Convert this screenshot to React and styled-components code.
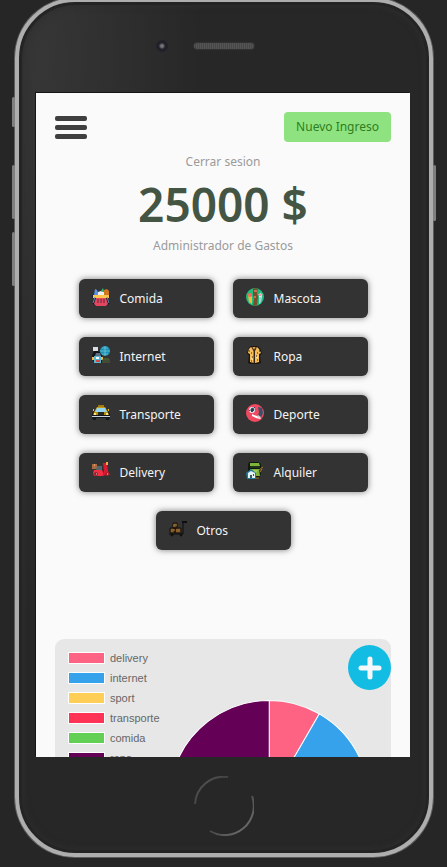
import React from "react";
import styled, { createGlobalStyle } from "styled-components";

const GlobalStyle = createGlobalStyle`
  *, *::before, *::after { box-sizing: border-box; }
  html, body { margin: 0; background: #262626; }
  body, button {
    font-family: "Noto Sans", "Open Sans", sans-serif;
    font-size: 12px;
    line-height: 18px;
  }
`;

const Page = styled.div`
  height: 100vh;
  min-height: 480px;
  padding: 0 14px 10px 15px;
  overflow: hidden;
  background: #262626;
`;

const Device = styled.div`
  position: relative;
  height: calc(100% + 2px);
  margin-top: -2px;
  padding: 0 19px 0 17px;
  display: flex;
  flex-direction: column;
  border: 4px solid #aeaeae;
  border-radius: 60px;
  background: radial-gradient(ellipse 160px 560px at 20px 60px, #363636, #272727);
  box-shadow: 0 0 0 1px #5c5c5c, inset 0 0 0 3px #242424, inset 0 0 6px 4px #2e2e2e;
`;

const SideKey = styled.span`
  position: absolute;
  top: ${(p) => p.$top}px;
  ${(p) => (p.$side === "left" ? "left: -7px;" : "right: -7px;")}
  width: 3px;
  height: ${(p) => p.$length}px;
  border-radius: 2px;
  background: #808080;
`;

const TopBezel = styled.div`
  flex: none;
  height: 91px;
  padding: 0 0 3px 2px;
  display: grid;
  grid-template-columns: 1fr auto 1fr;
  align-items: center;
`;

const Camera = styled.span`
  justify-self: end;
  width: 12px;
  height: 12px;
  margin-right: 26px;
  border: 3px solid #222029;
  border-radius: 50%;
  background: radial-gradient(circle, #77777c 0 1px, #34333b 3px);
`;

const Speaker = styled.span`
  width: 60px;
  height: 6px;
  border-radius: 3px;
  background: repeating-linear-gradient(90deg, #545454 0 1px, #474747 1px 2px);
  box-shadow: 0 0 1px 1px #333333;
`;

const BottomBezel = styled.div`
  flex: none;
  height: 96px;
  padding: 2px 0 0 2px;
  display: flex;
  align-items: center;
  justify-content: center;
`;

const HomeButton = styled.button`
  width: 60px;
  height: 60px;
  padding: 0;
  border: 0;
  border-radius: 50%;
  background: none;
`;

const Viewport = styled.div`
  position: relative;
  flex: 1;
  min-height: 0;
  background: #fafafa;
  box-shadow: -1px -1px 0 #151515;
`;

const Scroller = styled.main`
  height: 100%;
  padding: 19px;
  overflow-y: auto;
  scrollbar-width: none;
`;

const Header = styled.header`
  display: flex;
  align-items: center;
  justify-content: space-between;
`;

const MenuButton = styled.button`
  display: flex;
  flex-direction: column;
  gap: 4px;
  padding: 0;
  border: 0;
  background: none;
`;

const MenuBar = styled.span`
  width: 32px;
  height: 5px;
  border-radius: 2px;
  background: #3f3f3f;
`;

const IncomeButton = styled.button`
  padding: 6px 12px;
  border: 0;
  border-radius: 4px;
  background: #8ee380;
  color: #2f7d22;
`;

const Summary = styled.section`
  display: flex;
  flex-direction: column;
  align-items: center;
  margin-top: 11px;
  color: #9b9b9b;
`;

const LogoutLink = styled.a`
  color: inherit;
  text-decoration: none;
`;

const Amount = styled.h1`
  margin: 4px 0;
  color: #445544;
  font-size: 46px;
  font-weight: 600;
  line-height: 58px;
`;

const Caption = styled.p`
  margin: 0;
`;

const Categories = styled.nav`
  display: flex;
  flex-wrap: wrap;
  justify-content: center;
  gap: 19px;
  max-width: 300px;
  margin: 24px auto 0;
`;

const CategoryButton = styled.button`
  display: flex;
  align-items: center;
  gap: 10px;
  width: 135px;
  height: 39px;
  padding: 0 13px;
  border: 0;
  border-radius: 6px;
  background: #333333;
  color: #f4f4f4;
  box-shadow: 0 0 6px rgba(0, 0, 0, 0.5);
`;

const CategoryIcon = styled.svg`
  flex: none;
  width: 18px;
  height: 18px;
  margin-bottom: 4px;
`;

const ChartCard = styled.section`
  display: flex;
  align-items: flex-start;
  margin-top: 89px;
  padding: 9px 13px 24px;
  border-radius: 9px;
  background: #e7e7e7;
`;

const Legend = styled.ul`
  flex: none;
  margin: 0;
  padding: 0;
  list-style: none;
  color: #666666;
  font-family: "Liberation Sans", Arial, sans-serif;
  font-size: 11px;
  line-height: 20px;
`;

const LegendItem = styled.li`
  display: flex;
  align-items: center;
  gap: 5px;
  height: 20px;
`;

const Swatch = styled.span`
  width: 37px;
  height: 12px;
  border: 1px solid #ffffff;
  background: ${(p) => p.$color};
`;

const Pie = styled.svg`
  flex: 1;
  min-width: 0;
  height: 201px;
  margin-top: 52px;
`;

const AddButton = styled.button`
  position: absolute;
  right: 19px;
  bottom: 67px;
  display: flex;
  align-items: center;
  justify-content: center;
  width: 43px;
  height: 45px;
  padding: 0;
  border: 0;
  border-radius: 50%;
  background: #12bce2;
`;

const ART = {
  Comida: (
    <>
      <path d="M0 7h18v2l-2 1 2 5-3 3H3l-3-3 2-5-2-1z" fill="#171c2c" />
      <path d="M2 7l1-6 2 1 2 5z" fill="#5b91e8" />
      <path d="M6 4l3-1 4 1v4H6z" fill="#edf0ef" />
      <path d="M9 3l2-3 1 3-2 1z" fill="#2bb778" />
      <path d="M12 2l3-1 2 2v4h-5z" fill="#cf7621" />
      <path d="M1 7h16v3H1z" fill="#ffc54c" />
      <path d="M4 10h10l2 6-2 2H4l-2-2z" fill="#e1475f" />
      <path d="M6 11v4M9 11v4M12 11v4" stroke="#64243b" />
      <path d="M3 9L1 15M15 9l2 6" stroke="#568ab0" />
    </>
  ),
  Mascota: (
    <>
      <circle cx="9" cy="9" r="9" fill="#1fbd7b" />
      <path d="M7 1l2-1 3 1-1 4 1 4-1 8-2 1-2-1 1-6-1-4z" fill="#77502e" />
      <path d="M8 2h3v2H8zM8 8h2v2H8z" fill="#d46b53" />
      <path d="M2 7l2-2 2 2v9l-3-2z" fill="#f5b83f" />
      <circle cx="4" cy="7" r="2" fill="#f06964" />
      <path d="M13 6l2-1 1 2-1 7-2 2z" fill="#e9f0f1" />
      <path d="M12 6h5l-2 2h-2z" fill="#f39aaa" />
      <path d="M14 9v6" stroke="#72a8ce" />
    </>
  ),
  Internet: (
    <>
      <path d="M1 1h5v4H1z" fill="#d9dde1" />
      <path d="M2 5h4l4 3v9H2L0 10z" fill="#11151b" />
      <circle cx="13" cy="5" r="5" fill="#1f8fb1" />
      <path d="M13 0v10M8 5h10M10 2h6M10 8h6" stroke="#7dd8e7" strokeWidth=".6" />
      <path d="M2 10h7v7H2z" fill="#58b9d5" />
      <path d="M4 7h4l1 3H3z" fill="#607080" />
      <path d="M0 11h2v3H0zM9 11h2v3H9z" fill="#f3b94a" />
      <path d="M4 11h3v2H4z" fill="#ffffff" />
      <path d="M4 14h4v2H4z" fill="#d34848" />
      <path d="M11 17v-4h6v4M13 17v-5M15 17v-5" fill="none" stroke="#526435" />
    </>
  ),
  Ropa: (
    <>
      <path d="M5 0h6l3 2 2 5-2 3 1 7-3 1H4l-2-1 1-7-2-3 2-5z" fill="#1a1714" />
      <path d="M5 1l-2 2-1 4 2 1v8l4 1V5zM11 1l2 2 2 4-2 1v8l-4 1V5z" fill="#f5bd5c" />
      <path d="M5 1l3 3 3-3z" fill="#dfa247" />
      <path d="M6 1l2 4 2-4M8 5v12" fill="none" stroke="#4b321b" />
      <path d="M5 7h1M11 7h1M6 11h1M10 10h1M5 15h1M11 14h1M3 5h1M13 5h1" stroke="#332a20" strokeWidth="1" />
      <path d="M5 12l2 2M10 12l2-1" stroke="#ffedaa" />
    </>
  ),
  Transporte: (
    <>
      <path d="M3 6l3-3h6l3 3 3 4v3l-1 3h-3v-2H4v2H1l-1-3v-3z" fill="#11151c" />
      <path d="M6 1h6v2H6z" fill="#9e7b12" />
      <path d="M5 3h8l3 5H2z" fill="#c69818" />
      <path d="M5 4h8l2 4H3z" fill="#91d5ee" />
      <path d="M2 8h14l1 3H1z" fill="#b68c13" />
      <path d="M6 8h6v3H6z" fill="#272820" />
      <path d="M2 9h2v2H2zM14 9h2v2h-2z" fill="#ffe38b" />
      <path d="M0 12h18v1H0z" fill="#c7d2df" />
      <path d="M1 6h1M16 6h1" stroke="#eabf28" strokeWidth="2" />
    </>
  ),
  Deporte: (
    <>
      <circle cx="9" cy="9" r="9" fill="#f04960" />
      <path d="M12 3l4 1 1 5-2 5-3-2 1-4z" fill="#375269" />
      <circle cx="6" cy="6" r="3" fill="#dce8ef" />
      <path d="M5 5l2-1 1 2-2 2-1-1zM3 6l1 1M8 3l1 1" fill="#293d54" stroke="#293d54" strokeWidth=".9" />
      <path d="M6 10l2 1 3 1 4 2-1 1-4-1-4-2z" fill="#ffffff" />
      <path d="M12 11l3 2-1 1-3-1z" fill="#e8c1bd" />
    </>
  ),
  Delivery: (
    <>
      <path d="M0 2h5v5H0z" fill="#aa6b42" />
      <path d="M2 2h1v2H2z" fill="#da9b64" />
      <path d="M5 4h5v4H4z" fill="#526571" />
      <path d="M2 8h8l1 2v4H2l-1-3z" fill="#f52e42" />
      <path d="M11 1h4l1 8 2 4h-2l-2-2-2 3h-2l2-5z" fill="#d71c31" />
      <path d="M14 0h2v3h-2z" fill="#edab4a" />
      <circle cx="4" cy="12" r="2" fill="#8c2733" />
      <circle cx="15" cy="12" r="2" fill="#b21e31" />
      <path d="M4 12h1M15 12h1" stroke="#d8d5d5" />
    </>
  ),
  Alquiler: (
    <>
      <path d="M3 0h9l3 2v4l-1 3 1 3-2 4H6l-4-3V3z" fill="#11180f" />
      <path d="M4 1h9l1 3H4zM4 7h9l1 7H7z" fill="#7fb43b" />
      <path d="M4 4h10v2H4z" fill="#22331d" />
      <path d="M7 8h5l-2 3H7z" fill="#a4c860" />
      <path d="M0 11l5-4 5 4v6H1z" fill="#207a99" />
      <path d="M2 11l3-2 4 2v5H2z" fill="#e5f2f4" />
      <path d="M4 13h2v3H4zM7 12h1v2H7z" fill="#38575f" />
      <path d="M13 8l4-3M14 10l2-3M10 16h3" stroke="#ad7a2c" />
    </>
  ),
  Otros: (
    <>
      <path d="M0 14h14V2h4" fill="none" stroke="#0d0d0f" strokeWidth="1" />
      <path d="M13 1h5v2h-5z" fill="#0d0d0f" />
      <path d="M1 8h5v5H1zM6 8h6v5H6zM4 3h4v5H4z" fill="#5c4020" stroke="#16120d" />
      <path d="M3 9v3M5 9v2M8 9v3M10 9v3M5 4v3M7 4v2" stroke="#b88235" />
      <circle cx="3" cy="15" r="1" fill="#252525" stroke="#0b0b0b" />
      <circle cx="12" cy="15" r="1" fill="#252525" stroke="#0b0b0b" />
    </>
  ),
};

const LEGEND = [
  ["delivery", "#ff6384"],
  ["internet", "#36a2eb"],
  ["sport", "#ffce56"],
  ["transporte", "#ff3355"],
  ["comida", "#63d055"],
  ["ropa", "#640055"],
];

const SLICES = [30, 70, 25, 40, 45, 150];

function slicePath(start, sweep) {
  const point = (deg) => {
    const rad = (deg * Math.PI) / 180;
    return `${100 + 99.5 * Math.sin(rad)} ${100 - 99.5 * Math.cos(rad)}`;
  };
  return `M100 100L${point(start)}A99.5 99.5 0 ${sweep > 180 ? 1 : 0} 1 ${point(start + sweep)}Z`;
}

function PieChart() {
  let start = 0;
  return (
    <Pie viewBox="0 0 200 200" role="img" aria-label="Gastos">
      {SLICES.map((sweep, i) => {
        const d = slicePath(start, sweep);
        start += sweep;
        return <path key={i} d={d} fill={LEGEND[i][1]} stroke="#ffffff" strokeWidth="1" />;
      })}
    </Pie>
  );
}

export default function App() {
  return (
    <>
      <GlobalStyle />
      <Page>
        <Device>
          <SideKey $side="left" $top={95} $length={30} />
          <SideKey $side="left" $top={163} $length={54} />
          <SideKey $side="left" $top={230} $length={54} />
          <SideKey $side="right" $top={163} $length={56} />
          <TopBezel>
            <Camera />
            <Speaker />
          </TopBezel>
          <Viewport>
            <Scroller>
              <Header>
                <MenuButton type="button" aria-label="Menú">
                  <MenuBar />
                  <MenuBar />
                  <MenuBar />
                </MenuButton>
                <IncomeButton type="button">Nuevo Ingreso</IncomeButton>
              </Header>
              <Summary>
                <LogoutLink href="#">Cerrar sesion</LogoutLink>
                <Amount>25000 $</Amount>
                <Caption>Administrador de Gastos</Caption>
              </Summary>
              <Categories>
                {Object.entries(ART).map(([name, art]) => (
                  <CategoryButton type="button" key={name}>
                    <CategoryIcon viewBox="0 0 18 18" aria-hidden="true">{art}</CategoryIcon>
                    {name}
                  </CategoryButton>
                ))}
              </Categories>
              <ChartCard>
                <Legend>
                  {LEGEND.map(([name, color]) => (
                    <LegendItem key={name}>
                      <Swatch $color={color} />
                      {name}
                    </LegendItem>
                  ))}
                </Legend>
                <PieChart />
              </ChartCard>
            </Scroller>
            <AddButton type="button" aria-label="Agregar">
              <svg width="24" height="24" viewBox="0 0 24 24" aria-hidden="true">
                <path d="M12 3v18M3 12h18" stroke="#f5f8fa" strokeWidth="5" strokeLinecap="round" />
              </svg>
            </AddButton>
          </Viewport>
          <BottomBezel>
            <HomeButton type="button" aria-label="Inicio">
              <svg width="60" height="60" viewBox="0 0 60 60" fill="none" aria-hidden="true">
                <defs>
                  <linearGradient id="ring" x1="0" y1="0" x2="1" y2="1">
                    <stop offset="0" stopColor="#5a5a5a" />
                    <stop offset=".35" stopColor="#3c3c3c" />
                    <stop offset=".5" stopColor="#262626" />
                    <stop offset=".6" stopColor="#4a4a4a" />
                    <stop offset="1" stopColor="#777777" />
                  </linearGradient>
                </defs>
                <path d="M1 28A29 29 0 0 1 34 1M58 20A29 29 0 0 1 16 55" stroke="url(#ring)" strokeWidth="2" />
              </svg>
            </HomeButton>
          </BottomBezel>
        </Device>
      </Page>
    </>
  );
}
